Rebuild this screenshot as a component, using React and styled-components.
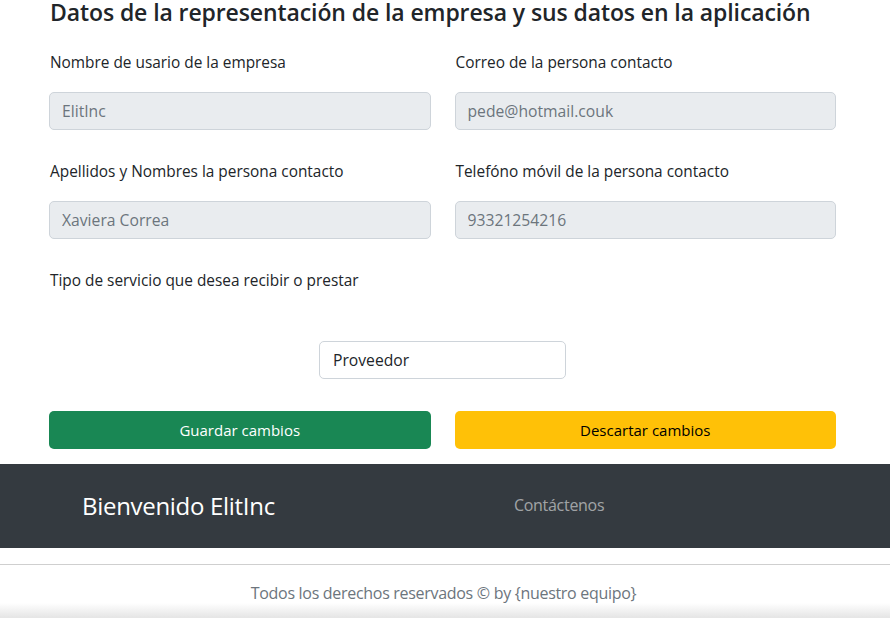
import React from "react";
import styled, { createGlobalStyle } from "styled-components";

const Global = createGlobalStyle`
  html, body { margin: 0; padding: 0; background: #fff; }
  body {
    font-family: "Open Sans", "Noto Sans", sans-serif;
    color: #212529;
    overflow: hidden;
  }
  * { box-sizing: border-box; }
`;

const Page = styled.div`
  width: 890px;
  height: 618px;
  display: flex;
  flex-direction: column;
  overflow: hidden;
`;

const Main = styled.main`
  padding: 0 54px 0 49px;
  display: flex;
  flex-direction: column;
`;

const Title = styled.h3`
  margin: 0 0 0 1px;
  font-size: 23px;
  font-weight: 600;
  line-height: 24px;
  color: #212529;
  letter-spacing: -0.1px;
`;

const Grid = styled.div`
  display: grid;
  grid-template-columns: 1fr 1fr;
  column-gap: 24px;
  row-gap: 30px;
  margin-top: 27px;
`;

const Field = styled.div`
  display: flex;
  flex-direction: column;
`;

const Label = styled.label`
  font-size: 15.4px;
  line-height: 24px;
  margin-bottom: 17px;
  padding-left: 1px;
`;

const Input = styled.input`
  height: 38px;
  width: 100%;
  padding: 0 12px;
  font-family: inherit;
  font-size: 15.7px;
  color: #6c757d;
  background: #e9ecef;
  border: 1px solid #ced4da;
  border-radius: 5px;
  outline: none;
`;

const SelectWrap = styled.div`
  display: flex;
  justify-content: center;
  margin-top: 31px;
`;

const Select = styled.div`
  width: 247px;
  height: 38px;
  padding: 0 13px;
  display: flex;
  align-items: center;
  font-size: 15.7px;
  color: #212529;
  background: #fff;
  border: 1px solid #ced4da;
  border-radius: 5px;
`;

const Buttons = styled.div`
  display: grid;
  grid-template-columns: 1fr 1fr;
  column-gap: 24px;
  margin-top: 32px;
`;

const Button = styled.button`
  height: 38px;
  border: none;
  border-radius: 5px;
  font-family: inherit;
  font-size: 15px;
  background: ${(p) => (p.$variant === "warning" ? "#ffc107" : "#198754")};
  color: ${(p) => (p.$variant === "warning" ? "#000" : "#fff")};
  cursor: pointer;
`;

const Navbar = styled.nav`
  margin-top: 15px;
  height: 84px;
  background: #343a40;
  display: flex;
  align-items: center;
  padding-left: 82px;
  padding-bottom: 2px;
`;

const Brand = styled.span`
  font-size: 24px;
  color: #fff;
  width: 432px;
  letter-spacing: -0.3px;
`;

const NavLink = styled.a`
  font-size: 16px;
  color: rgba(255, 255, 255, 0.55);
  letter-spacing: -0.3px;
  text-decoration: none;
`;

const Spacer = styled.div`
  height: 17px;
  border-bottom: 1px solid #cfcfcf;
`;

const Footer = styled.footer`
  flex: 1;
  display: flex;
  justify-content: center;
  padding-top: 16px;
  padding-right: 3px;
  font-size: 16px;
  line-height: 24px;
  color: #6c757d;
  letter-spacing: -0.3px;
  background: linear-gradient(to bottom, #fff 0, #fff 38px, #e6e6e6 52px);
`;

const fields = [
  { label: "Nombre de usario de la empresa", value: "ElitInc" },
  { label: "Correo de la persona contacto", value: "pede@hotmail.couk" },
  { label: "Apellidos y Nombres la persona contacto", value: "Xaviera Correa" },
  { label: "Telefóno móvil de la persona contacto", value: "93321254216" },
  { label: "Tipo de servicio que desea recibir o prestar" },
];

export default function App() {
  return (
    <Page>
      <Global />
      <Main>
        <Title>Datos de la representación de la empresa y sus datos en la aplicación</Title>
        <Grid>
          {fields.map((f) => (
            <Field key={f.label}>
              <Label>{f.label}</Label>
              {f.value && <Input value={f.value} disabled readOnly />}
            </Field>
          ))}
        </Grid>
        <SelectWrap>
          <Select>Proveedor</Select>
        </SelectWrap>
        <Buttons>
          <Button>Guardar cambios</Button>
          <Button $variant="warning">Descartar cambios</Button>
        </Buttons>
      </Main>
      <Navbar>
        <Brand>Bienvenido ElitInc</Brand>
        <NavLink href="#">Contáctenos</NavLink>
      </Navbar>
      <Spacer />
      <Footer>Todos los derechos reservados © by {"{nuestro equipo}"}</Footer>
    </Page>
  );
}
